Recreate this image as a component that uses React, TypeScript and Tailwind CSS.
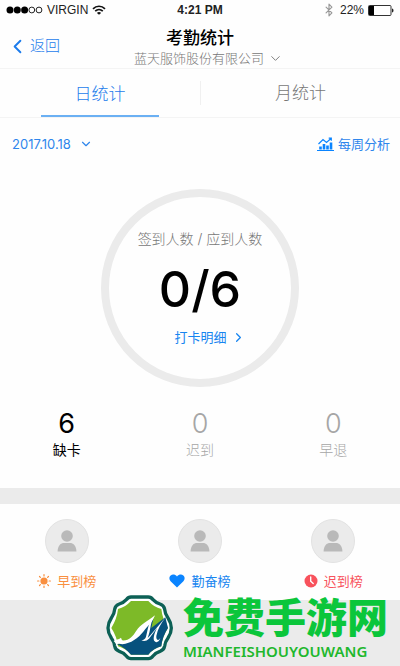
import { Bluetooth, ChevronDown, ChevronLeft, ChevronRight } from "lucide-react";

const counts = [
  { value: 6, label: "缺卡", color: "text-black" },
  { value: 0, label: "迟到", color: "font-light text-[#a6a6a6]" },
  { value: 0, label: "早退", color: "font-light text-[#a6a6a6]" },
];

const rankings = [
  { label: "早到榜", color: "text-[#f98f3f]", icon: <SunIcon /> },
  { label: "勤奋榜", color: "text-[#1785f0]", icon: <HeartIcon /> },
  { label: "迟到榜", color: "text-[#f8525c]", icon: <ClockIcon /> },
];

function SunIcon() {
  return (
    <svg viewBox="0 0 14 14" className="size-[14px]" fill="none" stroke="currentColor">
      <circle cx="7" cy="7" r="3.6" fill="currentColor" stroke="none" />
      <path
        d="M7 .6v1.3M7 12.1v1.3M.6 7h1.3M12.1 7h1.3M2.5 2.5l.9.9M10.6 10.6l.9.9M2.5 11.5l.9-.9M10.6 3.4l.9-.9"
        strokeWidth="1.2"
        strokeLinecap="round"
      />
    </svg>
  );
}

function HeartIcon() {
  return (
    <svg viewBox="0 0 16 14" className="h-[14px] w-4 text-[#0a84ff]" fill="currentColor">
      <path d="M8 13.4 1.6 7.3C-.2 5.5.1 2.7 1.7 1.4 3.5 0 6.3.4 8 2.5 9.7.4 12.5 0 14.3 1.4c1.6 1.3 1.9 4.1.1 5.9z" />
    </svg>
  );
}

function ClockIcon() {
  return (
    <svg viewBox="0 0 14 14" className="size-[14px]">
      <circle cx="7" cy="7" r="6.5" fill="currentColor" />
      <path d="M6.7 3v4.3l2.5 2.3" fill="none" stroke="#fff" strokeWidth="1.4" strokeLinecap="round" />
    </svg>
  );
}

function ChartIcon() {
  return (
    <svg viewBox="0 0 17 14" className="h-[14px] w-[17px]" fill="none" stroke="#0a84ff">
      <path d="M0 13.5h17" strokeWidth="1" />
      <path d="M3.5 12.5v-3M7 12.5V7M10.5 12.5v-4M14 12.5v-7" strokeWidth="2.6" />
      <path d="M1.5 7 6 2.5l3.5 3L14 1.5M11.7 1.2h2.6v2.6" strokeWidth="1.2" />
    </svg>
  );
}

function WifiIcon() {
  return (
    <svg viewBox="0 0 14 10" className="h-[10px] w-[14px]" fill="none" stroke="#111" strokeWidth="1.7">
      <path d="M1 3.8c3.4-3.4 8.6-3.4 12 0M3.2 6.2c2.2-2.1 5.4-2.1 7.6 0" />
      <path d="M7 9.8 4.9 7.9c1.2-1.1 3-1.1 4.2 0z" fill="#111" stroke="none" />
    </svg>
  );
}

function Battery() {
  return (
    <svg viewBox="0 0 26 11" className="h-[11px] w-[26px]">
      <rect x=".5" y=".5" width="22.5" height="10" rx="1" fill="#fff" stroke="#333" />
      <rect x="1" y="1" width="5" height="9" fill="#000" />
      <path d="M24 3.5c2 .5 2 3.5 0 4z" fill="#222" />
    </svg>
  );
}

function Avatar() {
  return (
    <svg viewBox="0 0 44 44" className="size-11">
      <circle cx="22" cy="22" r="21.5" fill="#ebebeb" stroke="#e2e2e2" />
      <circle cx="22" cy="17" r="5.8" fill="#b9b9b9" />
      <path d="M12.6 32.5c0-6 3.4-8.5 6.4-8.5h6c3 0 6.4 2.5 6.4 8.5z" fill="#b9b9b9" />
    </svg>
  );
}

function SiteLogo() {
  return (
    <svg viewBox="11 13 204 198" className="h-[66px] w-[68px] shrink-0">
      <path
        d="M86 19H138Q146 19 152 27 160 36 173 40 185 44 187 56 188 70 197 82 207 97 207 112 207 127 197 142 188 154 187 166 185 178 173 182 160 186 152 196 146 204 138 204H86Q78 204 72 196 64 186 51 182 39 178 37 166 36 154 27 142 17 127 17 112 17 97 27 82 36 70 37 56 39 44 51 40 64 36 72 27 78 19 86 19z"
        fill="#fff"
        stroke="#0c6055"
        strokeWidth="10"
        strokeLinejoin="round"
      />
      <path
        d="M86 31H138Q155 50 177 55 180 84 197 112 180 138 177 167 155 172 138 192H86Q69 172 47 167 44 138 27 112 44 84 47 55 69 50 86 31z"
        fill="#7dba28"
      />
      <path
        d="M44 160Q86 158 104 132C120 108 134 96 153 84L147 112 189 80 197 112Q180 138 177 167 155 172 138 192H86Q69 172 44 160z"
        fill="#07517d"
      />
      <path
        d="M34 151C41 145 48 148 56 141L59 149C80 151 92 136 102 120 114 101 134 94 158 74 150 96 134 108 124 122 107 144 86 158 60 161Q54 158 42 160z"
        fill="#fff"
      />
      <path
        d="M157 76C144 92 146 112 139 133L136 142 144 134 190 80C176 98 166 116 162 136Q161 148 168 148L174 143Q166 160 157 152C151 146 155 130 164 112L140 144Q130 154 117 149 128 148 131 138C136 122 136 104 148 86z"
        fill="#fff"
      />
    </svg>
  );
}

function StatusBar() {
  return (
    <div className="grid h-5 grid-cols-3 items-center px-[6px] font-['Liberation_Sans',sans-serif] text-xs text-[#222]">
      <div className="flex items-center gap-1">
        <svg viewBox="0 0 37 8" className="h-2 w-[37px]" fill="#000">
          <circle cx="4" cy="4" r="3.5" />
          <circle cx="11.3" cy="4" r="3.5" />
          <circle cx="18.6" cy="4" r="3.5" />
          <circle cx="25.8" cy="4" r="2.9" fill="none" stroke="#222" />
          <circle cx="33" cy="4" r="2.9" fill="none" stroke="#222" />
        </svg>
        <span>VIRGIN</span>
        <WifiIcon />
      </div>
      <span className="text-center font-bold">4:21 PM</span>
      <div className="flex items-center justify-end gap-1">
        <Bluetooth className="size-[14px] text-[#999]" strokeWidth={2} />
        <span>22%</span>
        <Battery />
      </div>
    </div>
  );
}

export default function App() {
  return (
    <div className="flex min-h-screen w-full flex-col bg-[#fefefe] font-['Inter','Noto_Sans_CJK_SC',sans-serif]">
      <StatusBar />

      <header className="grid h-[49px] grid-cols-[1fr_auto_1fr] items-center border-b border-[#f4f4f4] pt-2">
        <button className="flex items-center gap-px pb-1 pl-[6px] text-[15px] leading-5 font-light text-[#1c7cec]">
          <ChevronLeft className="size-[23px]" strokeWidth={2} />
          返回
        </button>
        <div className="flex flex-col items-center">
          <h1 className="text-[17px] leading-5 font-medium text-black">考勤统计</h1>
          <button className="flex items-center gap-1 pl-[17px] text-[13px] leading-5 font-light text-[#777]">
            蓝天服饰股份有限公司
            <ChevronDown className="size-[15px]" strokeWidth={1.5} />
          </button>
        </div>
      </header>

      <nav className="grid h-[49px] grid-cols-2 border-b border-[#f4f4f4] text-[17px] leading-6 font-light">
        <button className="flex justify-center text-[#1c7cec]">
          <span className="flex h-full w-[118px] items-center justify-center border-b-2 border-[#6bb0f3] pt-1">
            日统计
          </span>
        </button>
        <button className="my-3 flex items-center justify-center border-l border-[#f0f0f0] text-[#777]">
          月统计
        </button>
      </nav>

      <main>
        <div className="flex items-center justify-between pt-4 pr-[10px] pl-3 text-[13px] leading-5 text-[#2f86ec]">
          <button className="flex items-center gap-2">
            2017.10.18
            <ChevronDown className="size-[14px]" strokeWidth={2} />
          </button>
          <a href="#weekly" className="flex items-center gap-1">
            <ChartIcon />
            每周分析
          </a>
        </div>

        <section className="mx-auto mt-[35px] flex size-[198px] flex-col items-center rounded-full border-8 border-[#ebebeb] pt-8">
          <p className="text-sm leading-5 font-light text-[#777]">签到人数 / 应到人数</p>
          <p className="mt-2 text-[50px] leading-[64px] font-medium text-black">0/6</p>
          <a href="#detail" className="mt-[6px] flex items-center gap-1 pl-5 text-[13px] leading-5 text-[#1785f0]">
            打卡明细
            <ChevronRight className="size-[15px]" strokeWidth={2} />
          </a>
        </section>

        <section className="grid grid-cols-3 pt-[21px] pb-7 text-center">
          {counts.map((count) => (
            <div key={count.label} className={count.color}>
              <p className="text-[27px] leading-8">{count.value}</p>
              <p className="text-sm leading-5">{count.label}</p>
            </div>
          ))}
        </section>

        <div className="h-4 bg-[#ebebeb]" />

        <section className="grid h-24 grid-cols-3 pt-[15px]">
          {rankings.map((item) => (
            <a key={item.label} href="#ranking" className="flex flex-col items-center gap-2">
              <Avatar />
              <span className={`flex items-center gap-[6px] text-[13px] leading-5 ${item.color}`}>
                {item.icon}
                {item.label}
              </span>
            </a>
          ))}
        </section>
      </main>

      <footer className="relative min-h-[66px] flex-1 bg-[#ebebeb]">
        <div className="absolute -top-[5px] right-3 flex items-center gap-[9px]">
          <SiteLogo />
          <div className="text-[#0bc63b]">
            <p className="text-[41px] leading-[45px] font-black">免费手游网</p>
            <p className="font-['Noto_Sans',sans-serif] text-[15px] leading-5 font-semibold text-[#1fb82d]">
              MIANFEISHOUYOUWANG
            </p>
          </div>
        </div>
      </footer>
    </div>
  );
}
